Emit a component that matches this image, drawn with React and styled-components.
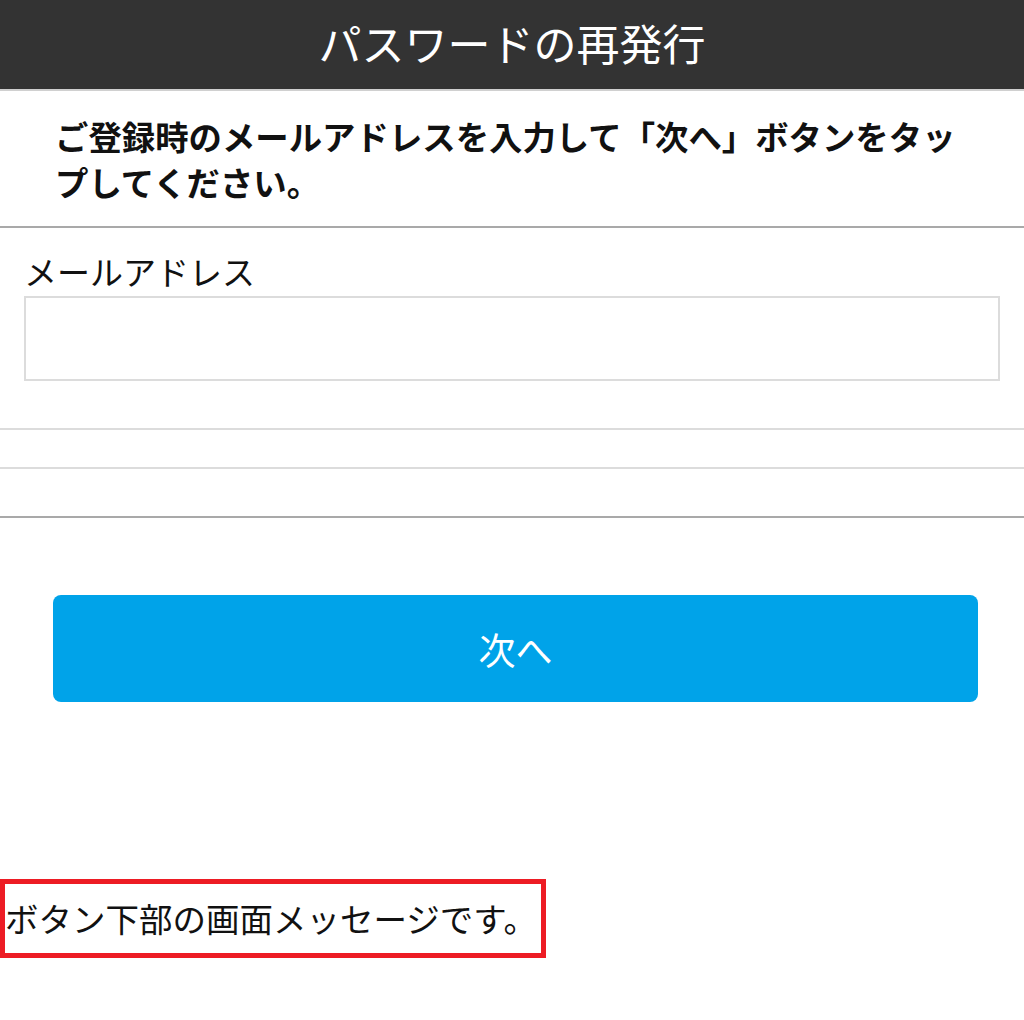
import React from "react";
import styled, { createGlobalStyle } from "styled-components";

const Global = createGlobalStyle`
  html, body { margin: 0; padding: 0; background: #fff; }
  body { font-family: "Noto Sans CJK JP", "Noto Sans", sans-serif; color: #111; }
  * { box-sizing: border-box; }
`;

const Page = styled.div`
  width: 1024px;
  min-height: 1020px;
  display: flex;
  flex-direction: column;
`;

const Header = styled.header`
  height: 91px;
  background: #333;
  border-bottom: 2px solid #d0d0d0;
  display: flex;
  align-items: center;
  justify-content: center;
`;

const Title = styled.h1`
  margin: 0;
  font-size: 43px;
  font-weight: 400;
  color: #fff;
  line-height: 1;
  padding-bottom: 4px;
`;

const Intro = styled.p`
  margin: 0;
  padding: 22px 55px 21px;
  font-size: 33.4px;
  font-weight: 700;
  line-height: 46px;
  color: #111;
  border-bottom: 2px solid #a9a9a9;
`;

const Field = styled.div`
  padding: 22px 24px 47px;
  display: flex;
  flex-direction: column;
  gap: 4px;
  border-bottom: 2px solid #dcdcdc;
`;

const Label = styled.label`
  font-size: 33px;
  line-height: 42px;
  color: #111;
`;

const Input = styled.input`
  width: 976px;
  height: 85px;
  border: 2px solid #dcdcdc;
  background: #fff;
  font-size: 30px;
  padding: 0 16px;
  outline: none;
`;

const Spacer = styled.div`
  height: ${(p) => p.h}px;
  border-bottom: 2px solid ${(p) => p.line};
`;

const ButtonWrap = styled.div`
  padding: 77px 46px 0 53px;
`;

const NextButton = styled.button`
  width: 925px;
  height: 107px;
  border: none;
  border-radius: 8px;
  background: #00a3e9;
  color: #fff;
  font-family: inherit;
  font-size: 37px;
  font-weight: 400;
  cursor: pointer;
`;

const Message = styled.div`
  margin-top: 177px;
  width: 546px;
  height: 79px;
  border: 5px solid #ed1c24;
  display: flex;
  align-items: center;
  font-size: 33.5px;
  color: #111;
  padding-bottom: 2px;
`;

export default function App() {
  return (
    <Page>
      <Global />
      <Header>
        <Title>パスワードの再発行</Title>
      </Header>
      <Intro>ご登録時のメールアドレスを入力して「次へ」ボタンをタップしてください。</Intro>
      <Field>
        <Label htmlFor="email">メールアドレス</Label>
        <Input id="email" type="email" />
      </Field>
      <Spacer h={39} line="#dcdcdc" />
      <Spacer h={49} line="#a9a9a9" />
      <ButtonWrap>
        <NextButton>次へ</NextButton>
      </ButtonWrap>
      <Message>ボタン下部の画面メッセージです。</Message>
    </Page>
  );
}
